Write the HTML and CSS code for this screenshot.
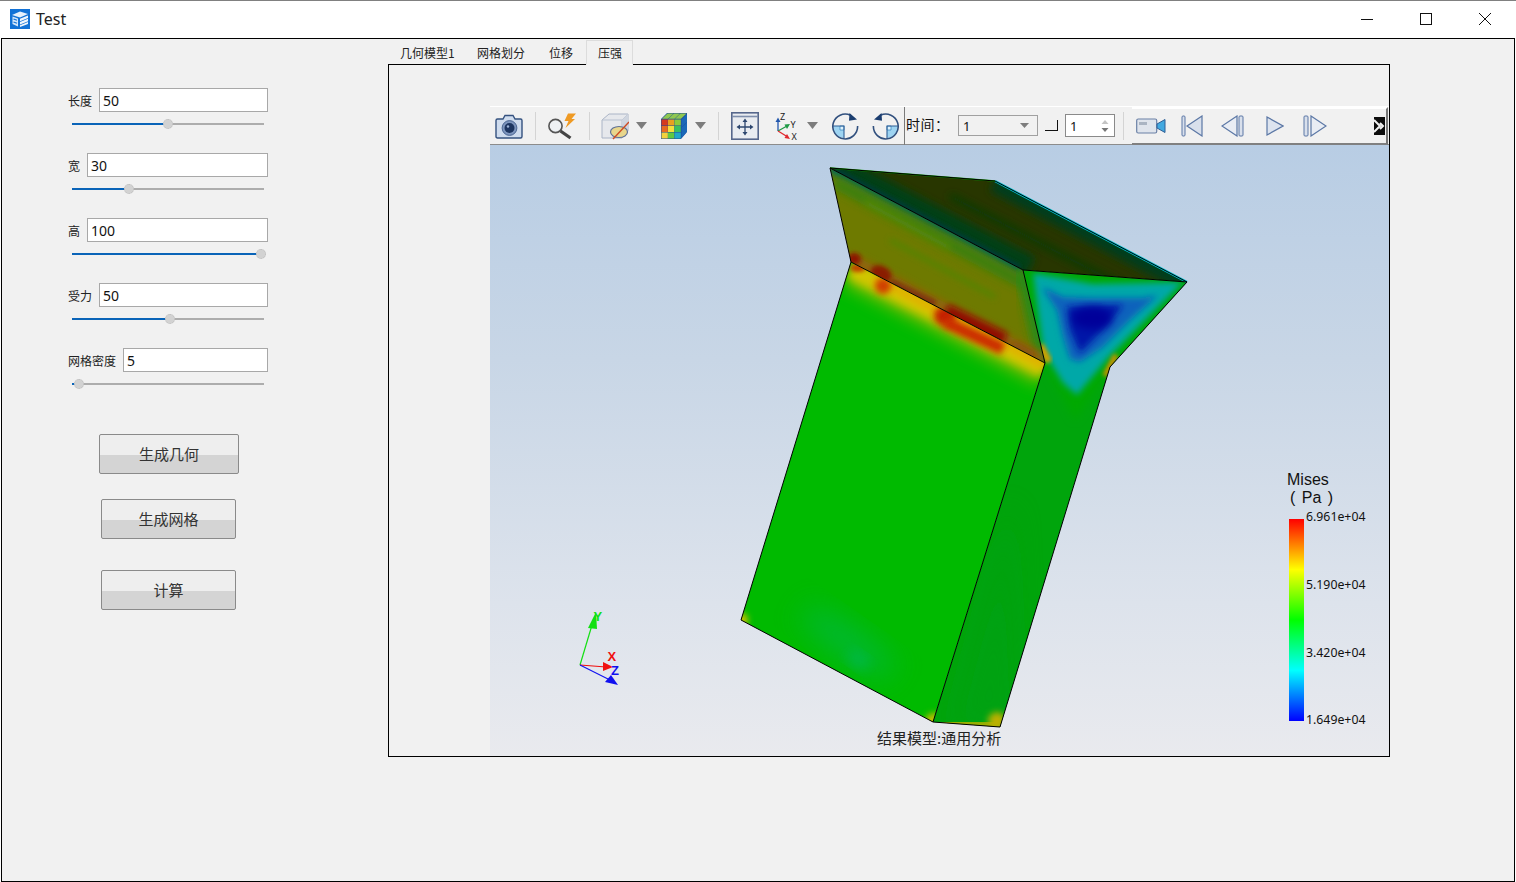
FILE: index.html
```html
<!DOCTYPE html>
<html lang="zh">
<head>
<meta charset="utf-8">
<title>Test</title>
<link rel="stylesheet" href="styles.css">
</head>
<body>
<div class="window">
  <header class="titlebar">
    <svg class="app-icon" viewBox="0 0 20 20" aria-hidden="true">
      <rect width="20" height="20" fill="#1272d6"/>
      <path d="M2 6 L10 2.5 L18 5 L10 8.5Z" fill="#e6f1fc"/>
      <path d="M2.5 7.5 L8 9.5 V17.5 L2.5 15Z" fill="#d5e7fa"/>
      <path d="M3.5 10 L7 11.3 M3.5 13 L7 14.3" stroke="#1272d6" stroke-width="1.2"/>
      <path d="M10 9.8 L18 6.5 V9 L10 12.3Z M10 13 L18 9.8 V12.3 L10 15.5Z M10 16.2 L18 13 V15 L10 18Z" fill="#f0f6fd"/>
    </svg>
    <span class="app-title">Test</span>
    <div class="win-controls">
      <svg class="win-btn" viewBox="0 0 12 12"><path d="M0 6.5H12" stroke="#111" fill="none"/></svg>
      <svg class="win-btn" viewBox="0 0 12 12"><rect x="0.5" y="0.5" width="11" height="11" stroke="#111" fill="none"/></svg>
      <svg class="win-btn" viewBox="0 0 12 12"><path d="M0 0L12 12M12 0L0 12" stroke="#111" fill="none"/></svg>
    </div>
  </header>

  <main class="content">
    <aside class="side">
      <div class="field">
        <div class="field-row"><label class="field-label">长度</label><div class="input">50</div></div>
        <div class="slider"><div class="slider-fill" style="width:96px"></div><span class="slider-knob" style="left:96px"></span></div>
      </div>
      <div class="field">
        <div class="field-row"><label class="field-label">宽</label><div class="input">30</div></div>
        <div class="slider"><div class="slider-fill" style="width:57px"></div><span class="slider-knob" style="left:57px"></span></div>
      </div>
      <div class="field">
        <div class="field-row"><label class="field-label">高</label><div class="input">100</div></div>
        <div class="slider"><div class="slider-fill" style="width:189px"></div><span class="slider-knob" style="left:189px"></span></div>
      </div>
      <div class="field">
        <div class="field-row"><label class="field-label">受力</label><div class="input">50</div></div>
        <div class="slider"><div class="slider-fill" style="width:98px"></div><span class="slider-knob" style="left:98px"></span></div>
      </div>
      <div class="field">
        <div class="field-row"><label class="field-label">网格密度</label><div class="input">5</div></div>
        <div class="slider"><div class="slider-fill" style="width:7px"></div><span class="slider-knob" style="left:7px"></span></div>
      </div>
      <button class="btn btn-geo"><span>生成几何</span></button>
      <button class="btn btn-mesh"><span>生成网格</span></button>
      <button class="btn btn-calc"><span>计算</span></button>
    </aside>

    <section class="workspace">
      <nav class="tabs">
        <span class="tab">几何模型1</span>
        <span class="tab">网格划分</span>
        <span class="tab">位移</span>
        <span class="tab tab-active">压强</span>
      </nav>
      <div class="pane">
        <div class="toolbar">
          <svg class="ic m5" viewBox="0 0 28 28"><path d="M2.5 7H8L10 3.5H18L20 7H25.5Q27 7 27 8.5V24.5Q27 26 25.5 26H2.5Q1 26 1 24.5V8.5Q1 7 2.5 7Z" fill="#cfdcee" stroke="#34517f" stroke-width="1.4"/><circle cx="14.5" cy="16" r="7.4" fill="#7d95bd" stroke="#4a6592"/><circle cx="14.5" cy="16" r="5" fill="#1d3560"/><circle cx="13" cy="14.5" r="1.2" fill="#9db4d8"/></svg>
          <span class="sep m12"></span>
          <svg class="ic m12" viewBox="0 0 28 28"><circle cx="7.5" cy="14" r="6.6" fill="#eef1f4" stroke="#555" stroke-width="1.6"/><path d="M12.5 19L22.5 26" stroke="#444" stroke-width="3.2"/><path d="M20 1.5H28L23.5 7H27L17.5 16L20.5 9H16.5Z" fill="#ef9a24"/></svg>
          <span class="sep m13"></span>
          <svg class="ic m11" viewBox="0 0 28 28"><path d="M1 8L8 2H27V19L21 26H1Z" fill="#e6e8ec" stroke="#aab4c6"/><path d="M1 8H21V26M21 8L27 2" fill="none" stroke="#b8c1d0"/><path d="M21 8L27 2V19L21 26Z" fill="#cfd5df"/><ellipse cx="18" cy="20" rx="8.5" ry="5.5" fill="#e8d68c" stroke="#5f7197" stroke-width="1.2"/><path d="M12 27L28 10" stroke="#cf4a22" stroke-width="1.4"/></svg>
          <svg class="dd m7" viewBox="0 0 11 7"><path d="M0 0H11L5.5 7Z" fill="#7d7d7d"/></svg>
          <svg class="ic m13" viewBox="0 0 28 28"><path d="M1 7L7 1H27V20L21 27H1Z" fill="#1e4f9a"/><rect x="1.5" y="7.5" width="6.3" height="6" fill="#d63a1e"/><rect x="8" y="7.5" width="6.3" height="6" fill="#e8a020"/><rect x="14.5" y="7.5" width="6.3" height="6" fill="#8ccb3a"/><rect x="1.5" y="14" width="6.3" height="6" fill="#e86a20"/><rect x="8" y="14" width="6.3" height="6" fill="#f4e03c"/><rect x="14.5" y="14" width="6.3" height="6" fill="#38c060"/><rect x="1.5" y="20.5" width="6.3" height="6" fill="#f2d23c"/><rect x="8" y="20.5" width="6.3" height="6" fill="#60c840"/><rect x="14.5" y="20.5" width="6.3" height="6" fill="#20a8c8"/><path d="M2 6.8L7.5 1.5H13.5L8 6.8ZM8.5 6.8L14 1.5H20L14.5 6.8ZM15 6.8L20.5 1.5H26.5L21 6.8Z" fill="#8fc850"/><path d="M21.5 7.5L27 2V10L21.5 15ZM21.5 15.5L27 10.5V19.5L21.5 26Z" fill="#1a68b8"/></svg>
          <svg class="dd m7" viewBox="0 0 11 7"><path d="M0 0H11L5.5 7Z" fill="#7d7d7d"/></svg>
          <span class="sep m12"></span>
          <svg class="ic m12" viewBox="0 0 28 28"><rect x="0.8" y="0.8" width="26.4" height="26.4" fill="#e9ecf1" stroke="#56678c" stroke-width="1.6"/><path d="M1 4.5H27" stroke="#7e8eac" stroke-width="1.6"/><path d="M14 8V22M7 15H21" stroke="#2d466f" stroke-width="1.3"/><path d="M14 6.5L16.5 10H11.5ZM14 23.5L16.5 20H11.5ZM5.5 15L9 12.5V17.5ZM22.5 15L19 12.5V17.5Z" fill="#2d466f"/></svg>
          <svg class="ic-triad m15" viewBox="0 0 26 28"><path d="M4 19V9" stroke="#2257ad" stroke-width="1.3"/><path d="M4 5.5L6.5 10H1.5Z" fill="#2257ad"/><path d="M4 19L13 14" stroke="#1f9a45" stroke-width="1.3"/><path d="M16 12L10.5 12.5L13 17Z" fill="#1f9a45"/><path d="M4 19L13 24.5" stroke="#e0282e" stroke-width="1.3"/><path d="M16 27L10.5 26L13 22Z" fill="#e0282e"/><text x="6" y="7.5" class="triad-txt">Z</text><text x="16.5" y="15.5" class="triad-txt">Y</text><text x="17.5" y="27.5" class="triad-txt">X</text></svg>
          <svg class="dd m7" viewBox="0 0 11 7"><path d="M0 0H11L5.5 7Z" fill="#7d7d7d"/></svg>
          <svg class="ic m13" viewBox="0 0 28 28"><path d="M2 14H13V26Q3 25 2 14Z" fill="#9ed4f2"/><path d="M9 14H13V18H9Z" fill="#dff2fc" stroke="#3f8ec4" stroke-width="0.8"/><path d="M2 14H13V26" fill="none" stroke="#2f5f96" stroke-width="1.1"/><path d="M19.5 3.3A12.4 12.4 0 1 0 26.6 14" fill="none" stroke="#31507e" stroke-width="1.6"/><path d="M18.5 1L26 7.5L18 8.8Z" fill="#1b3d6f"/></svg>
          <svg class="ic m13" viewBox="0 0 28 28"><path d="M26 14H15V26Q25 25 26 14Z" fill="#9ed4f2"/><path d="M15 14H19V18H15Z" fill="#dff2fc" stroke="#3f8ec4" stroke-width="0.8"/><path d="M26 14H15V26" fill="none" stroke="#2f5f96" stroke-width="1.1"/><path d="M8.5 3.3A12.4 12.4 0 1 1 1.4 14" fill="none" stroke="#31507e" stroke-width="1.6"/><path d="M9.5 1L2 7.5L10 8.8Z" fill="#1b3d6f"/></svg>
          <span class="sep-dark m4"></span>
          <span class="time-label">时间：</span>
          <div class="combo"><span>1</span><svg class="combo-arrow" viewBox="0 0 9 5"><path d="M0 0H9L4.5 5Z" fill="#7d7d7d"/></svg></div>
          <span class="corner m7"></span>
          <div class="spin m7"><span>1</span><svg class="spin-arrows" viewBox="0 0 8 12"><path d="M4 0L7.5 4H.5Z" fill="#c4c4c4"/><path d="M.5 8H7.5L4 12Z" fill="#777"/></svg></div>
          <span class="sep m8"></span>
          <div class="toolbar-sub">
            <svg class="ic-video" viewBox="0 0 30 16"><rect x="0.7" y="1" width="20" height="14" rx="1.5" fill="#dfe4ec" stroke="#6b80a6" stroke-width="1.2"/><rect x="3" y="4" width="8" height="3" fill="#aab4c2"/><path d="M21 6L29 1.5V14.5L21 10Z" fill="#43a9e0" stroke="#2f5f96"/></svg>
            <svg class="ic-play w22 m15" viewBox="0 0 22 22"><rect x="1" y="1" width="3" height="20" rx="1" fill="#d9e0ec" stroke="#5b77a5"/><path d="M21 1V21L6 11Z" fill="#d9e0ec" stroke="#5b77a5" stroke-width="1.2"/></svg>
            <svg class="ic-play w24 m18" viewBox="0 0 24 22"><path d="M16 1V21L1 11Z" fill="#e9edf4" stroke="#5b77a5" stroke-width="1.2"/><rect x="18" y="1" width="4" height="20" rx="1" fill="#d9e0ec" stroke="#5b77a5"/></svg>
            <svg class="ic-play w18 m21" viewBox="0 0 18 22"><path d="M1 2V20L17 11Z" fill="#dde4ef" stroke="#5b77a5" stroke-width="1.2"/></svg>
            <svg class="ic-play w24 m19" viewBox="0 0 24 22"><rect x="1" y="1" width="4" height="20" rx="1" fill="#d9e0ec" stroke="#5b77a5"/><path d="M8 1V21L23 11Z" fill="#e9edf4" stroke="#5b77a5" stroke-width="1.2"/></svg>
            <svg class="overflow" viewBox="0 0 11 18"><rect width="11" height="18" fill="#0c0c0c"/><path d="M0 3L6 9L0 15M6 6L9 9L6 12" fill="none" stroke="#f2f2f2" stroke-width="2"/></svg>
          </div>
        </div>

        <div class="viewport">
          <svg class="model" viewBox="490 145 899 611" aria-hidden="true">
            <defs>
              <filter id="b2" x="-40%" y="-40%" width="180%" height="180%"><feGaussianBlur stdDeviation="2"/></filter>
              <filter id="b3" x="-40%" y="-40%" width="180%" height="180%"><feGaussianBlur stdDeviation="3"/></filter>
              <filter id="b4" x="-30%" y="-30%" width="160%" height="160%"><feGaussianBlur stdDeviation="4"/></filter>
              <filter id="b7" x="-30%" y="-30%" width="160%" height="160%"><feGaussianBlur stdDeviation="7"/></filter>
              <filter id="b14" x="-50%" y="-50%" width="200%" height="200%"><feGaussianBlur stdDeviation="14"/></filter>
              <clipPath id="c-top"><polygon points="830,168 995,181 1187,282 1023,270"/></clipPath>
              <clipPath id="c-flap"><polygon points="830,168 1023,270 1045,363 851,262"/></clipPath>
              <clipPath id="c-front"><polygon points="851,262 1045,363 933,722 741,620"/></clipPath>
              <clipPath id="c-side"><polygon points="1023,270 1187,282 1110,367 1000,727 933,722 1045,363"/></clipPath>
            </defs>

            <g clip-path="url(#c-top)">
              <rect x="820" y="160" width="380" height="130" fill="#283600"/>
              <path d="M835 166L1030 268" stroke="#003f14" stroke-width="24" fill="none" filter="url(#b4)"/>
              <path d="M995 181L1187 282" stroke="#003c1c" stroke-width="22" fill="none" filter="url(#b4)"/>
              <path d="M950 196L1120 285" stroke="#003c10" stroke-width="5" fill="none" filter="url(#b4)"/>
              <path d="M835 170L1020 268" stroke="#003a3a" stroke-width="5" fill="none" filter="url(#b2)"/>
            </g>

            <g clip-path="url(#c-flap)">
              <rect x="820" y="160" width="240" height="210" fill="#6e7a00"/>
              <path d="M830 168L1023 270" stroke="#00685a" stroke-width="9" fill="none" filter="url(#b3)"/>
              <path d="M834 182L1025 284" stroke="#3a8010" stroke-width="12" fill="none" filter="url(#b4)"/>
              <path d="M865 202L950 248" stroke="#5a8808" stroke-width="5" fill="none" filter="url(#b3)"/>
              <path d="M890 240L995 297" stroke="#4f8608" stroke-width="4" fill="none" filter="url(#b3)"/>
              <path d="M1023 270L1045 363" stroke="#2a8a18" stroke-width="16" fill="none" filter="url(#b4)"/>
              <path d="M851 260L1045 361" stroke="#95610a" stroke-width="12" fill="none" filter="url(#b4)"/>
              <ellipse cx="854" cy="259" rx="7" ry="6" fill="#8c1500" filter="url(#b2)"/>
              <ellipse cx="881" cy="274" rx="11" ry="8" fill="#8a1c00" transform="rotate(27 881 274)" filter="url(#b2)"/>
              <path d="M890 282L935 304" stroke="#7e3508" stroke-width="7" fill="none" filter="url(#b2)"/>
              <path d="M945 312L1004 341" stroke="#900e00" stroke-width="17" fill="none" filter="url(#b3)"/>
              <path d="M1012 344L1035 356" stroke="#8a5208" stroke-width="7" fill="none" filter="url(#b3)"/>
            </g>

            <g clip-path="url(#c-front)">
              <rect x="730" y="255" width="330" height="480" fill="#00ba00"/>
              <path d="M851 272L1045 372" stroke="#60bc00" stroke-width="32" fill="none" filter="url(#b7)"/>
              <path d="M851 269L1045 369" stroke="#d2c600" stroke-width="20" fill="none" filter="url(#b4)"/>
              <path d="M875 278L1045 365" stroke="#e2b000" stroke-width="8" fill="none" filter="url(#b3)"/>
              <ellipse cx="858" cy="268" rx="8" ry="4" fill="#c04000" filter="url(#b2)"/>
              <ellipse cx="883" cy="286" rx="8" ry="8" fill="#d03c00" filter="url(#b3)"/>
              <ellipse cx="945" cy="316" rx="11" ry="10" fill="#c42400" filter="url(#b3)"/>
              <path d="M945 322L1003 349" stroke="#cc2c00" stroke-width="12" fill="none" filter="url(#b3)"/>
              <ellipse cx="848" cy="642" rx="55" ry="15" fill="#00b848" opacity="0.7" transform="rotate(35 848 642)" filter="url(#b14)"/>
              <ellipse cx="858" cy="660" rx="12" ry="7" fill="#00b860" opacity="0.7" transform="rotate(35 858 660)" filter="url(#b7)"/>
              <circle cx="741" cy="620" r="7" fill="#cfc000" filter="url(#b3)"/>
              <circle cx="934" cy="722" r="9" fill="#c8c000" filter="url(#b3)"/>
            </g>

            <g clip-path="url(#c-side)">
              <rect x="925" y="260" width="270" height="475" fill="#00a50c"/>
              <path d="M950 730L1010 500L1020 730Z" fill="#00a014" opacity="0.6" filter="url(#b14)"/>
              <path d="M1023 270L1187 282L1110 367L1075 420L1045 363Z" fill="#00a900" filter="url(#b4)"/>
              <path d="M1033 273L1093 284L1183 282L1108 358L1077 395L1063 383L1043 350Z" fill="#00a8a8" filter="url(#b3)"/>
              <path d="M1042 287L1063 297L1093 298L1143 298L1158 295L1130 320L1103 347L1080 362L1070 359L1063 337L1057 310Z" fill="#0c62bc" filter="url(#b3)"/>
              <path d="M1067 307L1123 305L1103 330L1080 353L1070 330Z" fill="#0018a8" filter="url(#b3)"/>
              <ellipse cx="1092" cy="318" rx="20" ry="11" fill="#00009a" filter="url(#b4)"/>
              <path d="M1040 345L1049 362" stroke="#d8a000" stroke-width="7" fill="none" filter="url(#b2)"/>
              <path d="M1116 355L1105 376" stroke="#e09000" stroke-width="5" fill="none" filter="url(#b2)"/>
              <path d="M935 724L1000 729" stroke="#a8b000" stroke-width="18" fill="none" filter="url(#b4)"/>
              <circle cx="997" cy="721" r="9" fill="#bcb000" filter="url(#b3)"/>
            </g>

            <path d="M995 181L1187 282" stroke="#00c0d0" stroke-width="2.4" fill="none"/>
            <path d="M830 168L995 181" stroke="#109a00" stroke-width="1.5" fill="none"/>
            <g fill="none" stroke="#000" stroke-width="1">
              <path d="M830 168L995 181L1187 282L1110 367L1000 727L933 722L741 620L851 262Z"/>
              <path d="M830 168L1023 270L1045 363L851 262"/>
              <path d="M1023 270L1187 282"/>
              <path d="M1045 363L933 722"/>
            </g>

            <path d="M580 665L592 625" stroke="#12e012" stroke-width="1.2"/>
            <path d="M596 612L588 628L597 629Z" fill="#12e012"/>
            <path d="M580 665L606 667" stroke="#f01010" stroke-width="1.2"/>
            <path d="M613 667L603 662L603 671Z" fill="#f01010"/>
            <path d="M580 665L610 680" stroke="#1010f0" stroke-width="1.2"/>
            <path d="M618 685L611 675L605 682Z" fill="#1010f0"/>
            <text x="593.5" y="621" class="axis axis-y">Y</text>
            <text x="607.5" y="661" class="axis axis-x">X</text>
            <text x="611" y="675" class="axis axis-z">Z</text>
          </svg>
          <div class="legend">
            <div class="legend-title">Mises</div>
            <div class="legend-unit">( Pa )</div>
            <div class="legend-bar"></div>
            <span class="legend-val v1">6.961e+04</span>
            <span class="legend-val v2">5.190e+04</span>
            <span class="legend-val v3">3.420e+04</span>
            <span class="legend-val v4">1.649e+04</span>
          </div>
          <div class="caption">结果模型:通用分析</div>
        </div>
      </div>
    </section>
  </main>
</div>
</body>
</html>
```

FILE: styles.css
```css
* { box-sizing: border-box; }
html, body { margin: 0; height: 100%; overflow: hidden; }
body { font-family: "Noto Sans", "Noto Sans CJK SC", sans-serif; color: #111; background: #fff; }

.window { width: 1516px; height: 882px; display: flex; flex-direction: column; background: #fff; border-top: 1px solid #808080; }

.titlebar { height: 37px; flex: none; display: flex; align-items: center; padding: 0 0 1px 10px; }
.app-icon { width: 20px; height: 20px; }
.app-title { margin-left: 6px; font-size: 16px; line-height: 18px; margin-top: -1px; color: #222; }
.win-controls { margin-left: auto; display: flex; align-items: center; margin-right: 25px; }
.win-btn { width: 12px; height: 12px; margin-left: 47px; display: block; }

.content { flex: 1; margin: 0 1px; display: flex; background: #f1f1f1; border: 1px solid #000; }

.side { width: 386px; flex: none; padding: 49px 0 0 66px; font-family: "Noto Sans CJK SC", sans-serif; }
.field { height: 65px; width: 200px; }
.field-row { display: flex; align-items: center; height: 24px; }
.field-label { font-size: 12px; color: #222; margin-right: 7px; white-space: nowrap; }
.input { flex: 1; height: 24px; background: #fff; border: 1px solid #a8a8a8; padding-left: 3px; font: 14px/24px "Noto Sans", sans-serif; color: #111; }

.slider { position: relative; margin: 11px 0 0 4px; width: 192px; height: 2px; background: #adadad; }
.slider-fill { height: 2px; background: #0a64b8; }
.slider-knob { position: absolute; top: -4px; width: 10px; height: 10px; margin-left: -5px; border-radius: 50%; background: #d2d2d2; border: 1px dotted #bcbcbc; }

.btn { display: block; height: 40px; padding: 0 0 2px; border: 1px solid #8a8a8a; border-radius: 2px; background: linear-gradient(#eeeeee 0, #eeeeee 52%, #d4d4d4 52%, #d4d4d4 100%); font: 15px "Noto Sans CJK SC", sans-serif; color: #333; }
.btn-geo { width: 140px; margin: 21px 0 0 31px; }
.btn-mesh { width: 135px; margin: 25px 0 0 33px; }
.btn-calc { width: 135px; margin: 31px 0 0 33px; }

.workspace { width: 1002px; flex: none; display: flex; flex-direction: column; margin-top: 1px; }
.tabs { display: flex; height: 25px; font: 12px "Noto Sans CJK SC", sans-serif; position: relative; z-index: 1; color: #222; }
.tab { padding: 0 12px; line-height: 25px; white-space: nowrap; }
.tab:first-child { width: 77px; }
.tab:nth-child(2) { width: 72px; }
.tab:nth-child(3) { width: 49px; }
.tab-active { width: 47px; background: #f1f1f1; border: 1px solid #dcdcdc; border-bottom: 1px solid #f1f1f1; line-height: 24px; padding: 0 11px; }
.pane { height: 693px; margin-top: -1px; background: #f1f1f1; border: 1px solid #000; padding: 41px 0 0 101px; display: flex; flex-direction: column; }

.toolbar { height: 39px; flex: none; display: flex; align-items: center; background: #f1f1f1; border-top: 1px solid #fff; border-bottom: 1px solid #8c8c8c; }
.ic { width: 28px; height: 28px; flex: none; }
.ic-triad { width: 26px; height: 28px; flex: none; overflow: visible; }
.triad-txt { font: 9px "Noto Sans", sans-serif; fill: #222; }
.dd { width: 11px; height: 7px; flex: none; }
.sep { width: 1px; height: 28px; background: #d4d4d4; flex: none; }
.sep-dark { width: 1px; height: 38px; background: #7a7a7a; flex: none; }
.m4 { margin-left: 4px; } .m5 { margin-left: 5px; } .m7 { margin-left: 7px; } .m8 { margin-left: 8px; }
.m11 { margin-left: 11px; } .m12 { margin-left: 12px; } .m13 { margin-left: 13px; } .m15 { margin-left: 15px; }
.m18 { margin-left: 18px; } .m19 { margin-left: 19px; } .m21 { margin-left: 21px; }

.time-label { width: 52px; margin: 0 0 4px 1px; font: 14px/20px "Noto Sans CJK SC", sans-serif; color: #111; flex: none; letter-spacing: 0.5px; }
.combo { width: 80px; height: 21px; flex: none; display: flex; align-items: center; justify-content: space-between; padding: 0 8px 0 4px; border: 1px solid #a0a0a0; font: 13px "Noto Sans", sans-serif; }
.combo-arrow { width: 9px; height: 5px; }
.corner { width: 13px; height: 11px; flex: none; border-right: 1px solid #111; border-bottom: 1px solid #111; background: #f1f1f1; }
.spin { width: 50px; height: 23px; flex: none; display: flex; align-items: center; justify-content: space-between; padding: 0 5px 0 4px; background: #fff; border: 1px solid #8a8a8a; font: 13px "Noto Sans", sans-serif; }
.spin-arrows { width: 8px; height: 12px; }
.toolbar-sub { margin: 0 1px 0 8px; flex: 1; height: 38px; align-self: flex-start; display: flex; align-items: center; padding: 0 1px 0 4px; background: #f1f1f1; border-top: 2px solid #fff; border-right: 2px solid #777; border-bottom: 2px solid #808080; }
.ic-video { width: 30px; height: 16px; flex: none; }
.ic-play { height: 22px; flex: none; }
.w18 { width: 18px; } .w22 { width: 22px; } .w24 { width: 24px; }
.overflow { width: 11px; height: 18px; margin-left: auto; flex: none; }

.viewport { position: relative; flex: 1; background: linear-gradient(#b8cde4 0, #c8d6e6 35%, #dde3ec 75%, #e9eaee 100%); overflow: hidden; }
.model { position: absolute; left: 0; top: 0; width: 899px; height: 611px; }
.axis { font: bold 13px "Liberation Sans", sans-serif; }
.axis-y { fill: #12e012; } .axis-x { fill: #f01010; } .axis-z { fill: #1010f0; }

.legend { position: absolute; left: 790px; top: 326px; width: 100px; height: 260px; font-family: "Noto Sans", sans-serif; }
.legend-title { position: absolute; left: 7px; top: 0; font: 16px/18px "Liberation Sans", sans-serif; color: #111; white-space: nowrap; }
.legend-unit { position: absolute; left: 10px; top: 18px; font: 16px/18px "Liberation Sans", sans-serif; word-spacing: 2px; color: #111; white-space: nowrap; }
.legend-bar { position: absolute; left: 9px; top: 48px; width: 15px; height: 202px; background: linear-gradient(#ff0000 0, #ffff00 25%, #00ff00 50%, #00ffff 75%, #0000ff 100%); }
.legend-val { position: absolute; left: 26px; font-size: 12.3px; line-height: 14px; color: #111; white-space: nowrap; }
.v1 { top: 39px; } .v2 { top: 107px; } .v3 { top: 175px; } .v4 { top: 242px; }

.caption { position: absolute; left: 387px; bottom: 9px; font: 15px/18px "Noto Sans CJK SC", sans-serif; color: #222; white-space: nowrap; }
```
